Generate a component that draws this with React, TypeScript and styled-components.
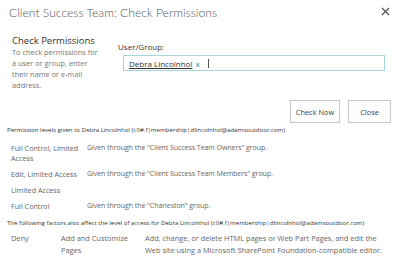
import React from 'react';
import styled, { createGlobalStyle } from 'styled-components';

const GlobalStyle = createGlobalStyle`
  html, body {
    margin: 0;
    padding: 0;
    background: #ffffff;
  }
  body {
    font-family: "Open Sans", "Liberation Sans", sans-serif;
    color: #444444;
  }
`;

// 権限の行
const rows = [
  { level: 'Full Control, Limited Access', how: 'Given through the "Client Success Team Owners" group.' },
  { level: 'Edit, Limited Access', how: 'Given through the "Client Success Team Members" group.' },
  { level: 'Limited Access', how: '' },
  { level: 'Full Control', how: 'Given through the "Charleston" group.' },
];

const account = 'Debra Lincolnhol (i:0#.f|membership|dlincolnhol@adamsoutdoor.com)';

const App = () => {
  return (
    <>
      <GlobalStyle />
      <Dialog>
        <TitleBar>
          <Title>Client Success Team: Check Permissions</Title>
          <CloseX>
            <svg width="9" height="9" viewBox="0 0 9 9">
              <path d="M1 1 L8 8 M8 1 L1 8" stroke="#555" strokeWidth="1.3" />
            </svg>
          </CloseX>
        </TitleBar>

        <Top>
          <Side>
            <SideHead>Check Permissions</SideHead>
            <SideText>To check permissions for a user or group, enter their name or e-mail address.</SideText>
          </Side>
          <Field>
            <Label>User/Group:</Label>
            <PeopleInput>
              <Person>Debra Lincolnhol</Person>
              <Remove>x</Remove>
              <Caret />
            </PeopleInput>
          </Field>
        </Top>

        <Buttons>
          <Button width={50}>Check Now</Button>
          <Button width={43}>Close</Button>
        </Buttons>

        <Note>Permission levels given to {account}</Note>
        <LevelGrid>
          {rows.map((r) => (
            <React.Fragment key={r.level}>
              <Cell>{r.level}</Cell>
              <HowCell>{r.how}</HowCell>
            </React.Fragment>
          ))}
        </LevelGrid>

        <Note>The following factors also affect the level of access for {account}</Note>
        <Factors>
          <FactorCell>Deny</FactorCell>
          <FactorCell>Add and Customize Pages</FactorCell>
          <FactorCell>Add, change, or delete HTML pages or Web Part Pages, and edit the Web site using a Microsoft SharePoint Foundation-compatible editor.</FactorCell>
        </Factors>
      </Dialog>
    </>
  );
};

export default App;

// ダイアログ
const Dialog = styled.div`
  width: 400px;
  height: 263px;
  box-sizing: border-box;
  padding: 0 9px 0 7px;
  overflow: hidden;
`;

// タイトルバー
const TitleBar = styled.div`
  display: flex;
  justify-content: space-between;
  align-items: flex-start;
  padding: 4px 0 0 2px;
  height: 26px;
  box-sizing: border-box;
`;

const Title = styled.div`
  font-family: Lato, "Open Sans", sans-serif;
  font-size: 12.1px;
  font-weight: 300;
  color: #555555;
  line-height: 17px;
`;

const CloseX = styled.div`
  display: flex;
  padding: 3px 1px 0 0;
`;

// 上段
const Top = styled.div`
  display: flex;
  padding: 8px 0 0 5px;
  height: 66px;
`;

const Side = styled.div`
  width: 90px;
  margin-right: 16px;
`;

const SideHead = styled.div`
  font-size: 9.5px;
  color: #333333;
  line-height: 13px;
`;

const SideText = styled.div`
  font-size: 7.4px;
  color: #777777;
  line-height: 11px;
`;

const Field = styled.div`
  flex: 1;
  padding-top: 7px;
`;

const Label = styled.div`
  font-size: 8px;
  color: #333333;
  line-height: 11px;
`;

const PeopleInput = styled.div`
  display: flex;
  align-items: center;
  margin: 3px 0 0 5px;
  height: 16px;
  box-sizing: border-box;
  border: 1px solid #a8d4dc;
  padding: 0 5px;
  width: 262px;
`;

const Person = styled.span`
  font-size: 8px;
  color: #333333;
  text-decoration: underline;
`;

const Remove = styled.span`
  font-size: 8px;
  color: #2a8dab;
  margin-left: 3px;
`;

const Caret = styled.span`
  width: 1px;
  height: 9px;
  background: #555555;
  margin-left: 8px;
`;

// ボタン
const Buttons = styled.div`
  display: flex;
  justify-content: flex-end;
  gap: 8px;
`;

const Button = styled.div<{ width: number }>`
  width: ${(p) => p.width}px;
  height: 23px;
  box-sizing: border-box;
  border: 1px solid #c6c6c6;
  background: #fdfdfd;
  font-size: 7.4px;
  color: #444444;
  display: flex;
  align-items: center;
  justify-content: center;
`;

// 注記
const Note = styled.div`
  font-size: 6.1px;
  color: #333333;
  line-height: 9px;
  margin-top: 2px;
  white-space: nowrap;
`;

// 権限テーブル
const LevelGrid = styled.div`
  display: grid;
  grid-template-columns: 76px 1fr;
  row-gap: 6px;
  padding: 9px 0 5px 4px;
`;

const Cell = styled.div`
  font-size: 7.2px;
  color: #666666;
  line-height: 10px;
`;

const HowCell = styled(Cell)`
  font-size: 7px;
  letter-spacing: -0.05px;
`;

// 影響する要因
const Factors = styled.div`
  display: grid;
  grid-template-columns: 50px 84px 1fr;
  padding: 5px 0 0 4px;
`;

const FactorCell = styled(Cell)`
  font-size: 7.4px;
  line-height: 12px;
`;
